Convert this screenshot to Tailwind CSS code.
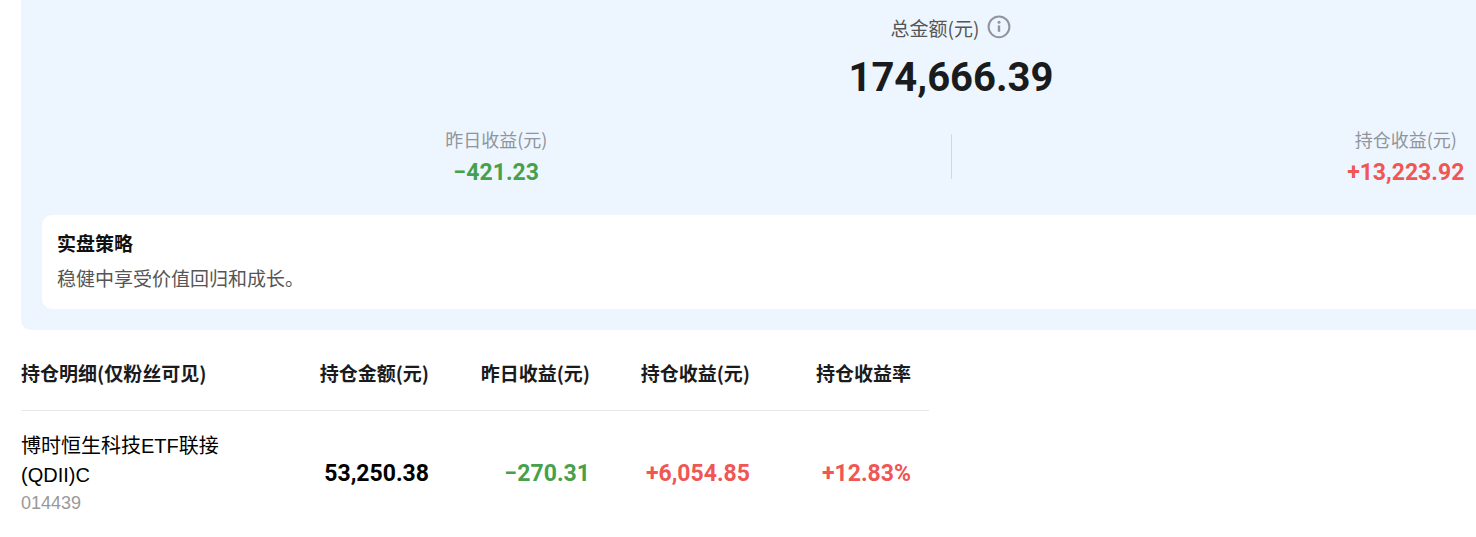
<!DOCTYPE html>
<html lang="zh-CN">
<head>
<meta charset="utf-8">
<meta name="viewport" content="width=device-width, initial-scale=1">
<title>实盘持仓</title>
<script src="https://cdn.jsdelivr.net/npm/@tailwindcss/browser@4"></script>
</head>
<body class="overflow-x-hidden bg-white pl-[21px] font-['Liberation_Sans','Noto_Sans_CJK_SC',sans-serif] text-[#1a1b1c]">
<main>
  <section class="min-w-[1860px] rounded-b-[10px] bg-[#edf6ff] px-[21px] pt-[14px] pb-[21px]">
    <div class="flex items-center justify-center gap-[8px] font-['Noto_Sans_CJK_SC',sans-serif] text-[19px] leading-[28px] text-[#555]">
      <span>总金额(元)</span>
      <button type="button" aria-label="总金额说明" class="text-[#90949c]">
        <svg class="size-[24px] overflow-visible" viewBox="0 0 24 24" fill="none" stroke="currentColor" stroke-width="2"><circle cx="12" cy="10.8" r="10.4"/><path d="M12 9.4v6.4" stroke-width="2.4"/><circle cx="12" cy="6.3" r="1.5" fill="currentColor" stroke="none"/></svg>
      </button>
    </div>
    <p class="mt-[12px] text-center font-[Roboto,sans-serif] text-[40px] leading-[48px] font-bold">174,666.39</p>
    <div class="mt-[24px] flex items-start text-center">
      <div class="flex-1">
        <p class="font-['Noto_Sans_CJK_SC',sans-serif] text-[18px] leading-[26px] text-[#90949c]">昨日收益(元)</p>
        <p class="mt-[2px] font-[Roboto,sans-serif] text-[23px] leading-[38px] font-bold text-[#47a04b]">−421.23</p>
      </div>
      <div class="mt-[8px] h-[45px] w-px bg-[#d0d8e2]"></div>
      <div class="flex-1">
        <p class="font-['Noto_Sans_CJK_SC',sans-serif] text-[18px] leading-[26px] text-[#90949c]">持仓收益(元)</p>
        <p class="mt-[2px] font-[Roboto,sans-serif] text-[23px] leading-[38px] font-bold text-[#f05654]">+13,223.92</p>
      </div>
    </div>
    <div class="mt-[23px] rounded-[10px] bg-white px-[15px] pt-[10px] pb-[14px] font-['Noto_Sans_CJK_SC',sans-serif] text-[19px] leading-[35px]">
      <h2 class="font-bold text-[#111]">实盘策略</h2>
      <p class="text-[#555]">稳健中享受价值回归和成长。</p>
    </div>
  </section>
  <table class="w-[908px] table-fixed border-collapse text-right">
    <colgroup><col class="w-[248px]"><col class="w-[160px]"><col class="w-[161px]"><col class="w-[160px]"><col></colgroup>
    <thead class="border-b border-[#e8e8e8] font-['Noto_Sans_CJK_SC',sans-serif] text-[19px] leading-[28px]">
      <tr>
        <th scope="col" class="pt-[29px] pb-[23px] text-left font-bold">持仓明细(仅粉丝可见)</th>
        <th scope="col" class="pt-[29px] pb-[23px] font-bold">持仓金额(元)</th>
        <th scope="col" class="pt-[29px] pb-[23px] font-bold">昨日收益(元)</th>
        <th scope="col" class="pt-[29px] pb-[23px] font-bold">持仓收益(元)</th>
        <th scope="col" class="pt-[29px] pr-[18px] pb-[23px] font-bold">持仓收益率</th>
      </tr>
    </thead>
    <tbody class="font-[Roboto,sans-serif] text-[23px] font-bold">
      <tr>
        <td class="pt-[21px] pb-[20px] pr-[40px] text-left font-['Liberation_Sans','Noto_Sans_CJK_SC',sans-serif] font-normal">
          <p class="text-[20px] leading-[29px] text-black">博时恒生科技ETF联接<wbr>(QDII)C</p>
          <p class="text-[18px] leading-[26px] text-[#999]">014439</p>
        </td>
        <td class="pt-[2px] text-black">53,250.38</td>
        <td class="pt-[2px] text-[#47a04b]">−270.31</td>
        <td class="pt-[2px] text-[#f05654]">+6,054.85</td>
        <td class="pt-[2px] pr-[18px] text-[#f05654]">+12.83%</td>
      </tr>
    </tbody>
  </table>
</main>
</body>
</html>
